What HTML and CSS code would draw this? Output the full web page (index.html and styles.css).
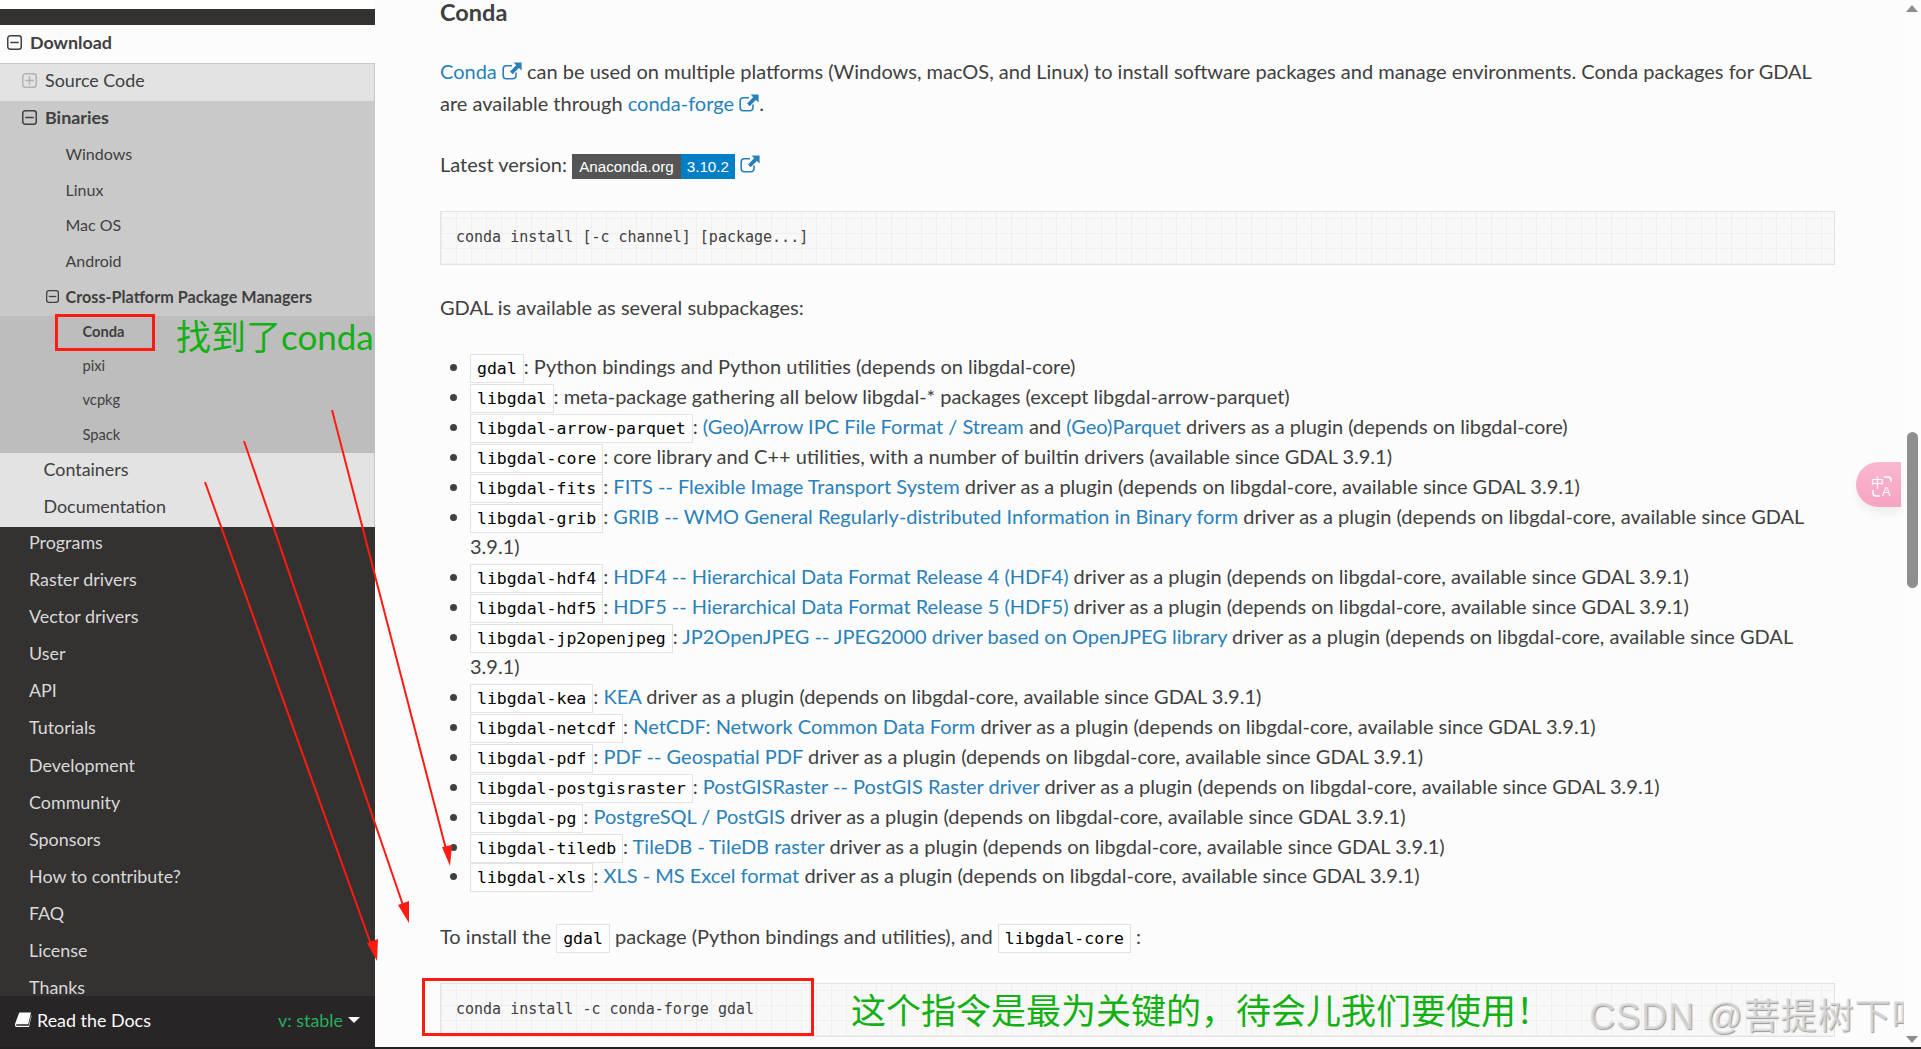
FILE: index.html
```html
<!DOCTYPE html>
<html lang="en">

<head>
    <meta charset="UTF-8">
    <title>Download - GDAL</title>
    <link rel="stylesheet" href="styles.css">
</head>

<body>
    <svg class="defs" width="0" height="0">
        <symbol id="minus" viewBox="0 0 14 14">
            <rect x="0.7" y="0.7" width="12.6" height="12.6" rx="2.4" fill="none" stroke="currentColor" stroke-width="1.4" />
            <path d="M3 7h8" stroke="currentColor" stroke-width="1.4" />
        </symbol>
        <symbol id="plus" viewBox="0 0 14 14">
            <rect x="0.7" y="0.7" width="12.6" height="12.6" rx="2.4" fill="none" stroke="currentColor" stroke-width="1.4" />
            <path d="M3 7h8M7 3v8" stroke="currentColor" stroke-width="1.4" />
        </symbol>
        <symbol id="ext" viewBox="0 0 20 18">
            <path d="M14 10.5v3.2a3 3 0 0 1-3 3H4.2a3 3 0 0 1-3-3V6.8a3 3 0 0 1 3-3H10" fill="none" stroke="currentColor" stroke-width="1.6" />
            <path d="M11.6 0.6H19.6V8.6L16.9 6 10.6 12.2 8 9.6 14.2 3.3Z" fill="currentColor" />
        </symbol>
    </svg>

    <div class="page">
        <nav class="sidebar">
            <div class="sidebar-top"></div>
            <a class="nav-l1 current"><svg class="tree-icon"><use href="#minus" /></svg>Download</a>
            <a class="nav-l2 muted"><svg class="tree-icon"><use href="#plus" /></svg>Source Code</a>
            <div class="group-l2">
                <a class="nav-l2 open"><svg class="tree-icon"><use href="#minus" /></svg>Binaries</a>
                <a class="nav-l3">Windows</a>
                <a class="nav-l3">Linux</a>
                <a class="nav-l3">Mac OS</a>
                <a class="nav-l3">Android</a>
                <a class="nav-l3 open"><svg class="tree-icon small"><use href="#minus" /></svg>Cross-Platform Package Managers</a>
                <div class="group-l4">
                    <a class="nav-l4 open">Conda</a>
                    <a class="nav-l4">pixi</a>
                    <a class="nav-l4">vcpkg</a>
                    <a class="nav-l4">Spack</a>
                </div>
            </div>
            <a class="nav-l2">Containers</a>
            <a class="nav-l2">Documentation</a>
            <a class="nav-top">Programs</a>
            <a class="nav-top">Raster drivers</a>
            <a class="nav-top">Vector drivers</a>
            <a class="nav-top">User</a>
            <a class="nav-top">API</a>
            <a class="nav-top">Tutorials</a>
            <a class="nav-top">Development</a>
            <a class="nav-top">Community</a>
            <a class="nav-top">Sponsors</a>
            <a class="nav-top">How to contribute?</a>
            <a class="nav-top">FAQ</a>
            <a class="nav-top">License</a>
            <a class="nav-top">Thanks</a>
            <div class="rtd-badge">
                <span class="rtd-name">
                    <svg class="rtd-book" viewBox="0 0 18 18">
                        <path d="M4.5 1.5H17L14 14H2.2C0.8 14 0.6 15.5 2 15.5H14.5L17.2 4.5 17.6 5 14.8 17H2C0 17-.4 15 .3 13Z" fill="#fcfcfc" />
                    </svg>
                    Read the Docs
                </span>
                <span class="rtd-version">v: stable<i class="caret"></i></span>
            </div>
        </nav>

        <main class="content">
            <h3>Conda</h3>
            <p class="tall"><a href="#">Conda <svg class="ext"><use href="#ext" /></svg></a> can be used on multiple platforms (Windows, macOS, and Linux) to install software packages and manage environments. Conda packages for GDAL are available through <a href="#">conda-forge <svg class="ext"><use href="#ext" /></svg></a>.</p>
            <p class="tall">Latest version: <span class="badge"><span class="badge-label">Anaconda.org</span><span class="badge-value">3.10.2</span></span> <a href="#"><svg class="ext"><use href="#ext" /></svg></a></p>
            <pre class="block">conda install [-c channel] [package...]</pre>
            <p>GDAL is available as several subpackages:</p>
            <ul>
                <li><code>gdal</code>: Python bindings and Python utilities (depends on libgdal-core)</li>
                <li><code>libgdal</code>: meta-package gathering all below libgdal-* packages (except libgdal-arrow-parquet)</li>
                <li><code>libgdal-arrow-parquet</code>: <a href="#">(Geo)Arrow IPC File Format / Stream</a> and <a href="#">(Geo)Parquet</a> drivers as a plugin (depends on libgdal-core)</li>
                <li><code>libgdal-core</code>: core library and C++ utilities, with a number of builtin drivers (available since GDAL 3.9.1)</li>
                <li><code>libgdal-fits</code>: <a href="#">FITS -- Flexible Image Transport System</a> driver as a plugin (depends on libgdal-core, available since GDAL 3.9.1)</li>
                <li><code>libgdal-grib</code>: <a href="#">GRIB -- WMO General Regularly-distributed Information in Binary form</a> driver as a plugin (depends on libgdal-core, available since GDAL 3.9.1)</li>
                <li><code>libgdal-hdf4</code>: <a href="#">HDF4 -- Hierarchical Data Format Release 4 (HDF4)</a> driver as a plugin (depends on libgdal-core, available since GDAL 3.9.1)</li>
                <li><code>libgdal-hdf5</code>: <a href="#">HDF5 -- Hierarchical Data Format Release 5 (HDF5)</a> driver as a plugin (depends on libgdal-core, available since GDAL 3.9.1)</li>
                <li><code>libgdal-jp2openjpeg</code>: <a href="#">JP2OpenJPEG -- JPEG2000 driver based on OpenJPEG library</a> driver as a plugin (depends on libgdal-core, available since GDAL 3.9.1)</li>
                <li><code>libgdal-kea</code>: <a href="#">KEA</a> driver as a plugin (depends on libgdal-core, available since GDAL 3.9.1)</li>
                <li><code>libgdal-netcdf</code>: <a href="#">NetCDF: Network Common Data Form</a> driver as a plugin (depends on libgdal-core, available since GDAL 3.9.1)</li>
                <li><code>libgdal-pdf</code>: <a href="#">PDF -- Geospatial PDF</a> driver as a plugin (depends on libgdal-core, available since GDAL 3.9.1)</li>
                <li><code>libgdal-postgisraster</code>: <a href="#">PostGISRaster -- PostGIS Raster driver</a> driver as a plugin (depends on libgdal-core, available since GDAL 3.9.1)</li>
                <li><code>libgdal-pg</code>: <a href="#">PostgreSQL / PostGIS</a> driver as a plugin (depends on libgdal-core, available since GDAL 3.9.1)</li>
                <li><code>libgdal-tiledb</code>: <a href="#">TileDB - TileDB raster</a> driver as a plugin (depends on libgdal-core, available since GDAL 3.9.1)</li>
                <li><code>libgdal-xls</code>: <a href="#">XLS - MS Excel format</a> driver as a plugin (depends on libgdal-core, available since GDAL 3.9.1)</li>
            </ul>
            <p class="tall">To install the <code>gdal</code> package (Python bindings and utilities), and <code>libgdal-core</code> :</p>
            <pre class="block">conda install -c conda-forge gdal</pre>
        </main>
    </div>

    <!-- things drawn on top of the screenshot -->
    <div class="notes">
        <svg class="arrows" width="1921" height="1049" viewBox="0 0 1921 1049">
            <g stroke="#ff1a12" stroke-width="2" fill="none">
                <path d="M332 410L447 853" />
                <path d="M244 441L405 911" />
                <path d="M205 482L373 950" />
            </g>
            <g fill="#ff1a12">
                <path d="M450 866L442 847 452 845Z" />
                <path d="M409 923L398 905 409 901Z" />
                <path d="M377 961L367 943 378 939Z" />
            </g>
        </svg>
        <div class="box box-conda"></div>
        <div class="box box-cmd"></div>
        <div class="green-note note-conda">找到了conda</div>
        <div class="green-note note-cmd">这个指令是最为关键的，待会儿我们要使用！</div>
        <div class="watermark">CSDN @菩提树下呀</div>
        <div class="translate">
            <svg viewBox="0 -5 24 30" width="24" height="30">
                <text x="0" y="12" class="tr-zh">中</text>
                <text x="11" y="21" class="tr-en">A</text>
                <path d="M13 2h4a3 3 0 0 1 3 3v2M2 15v3a3 3 0 0 0 3 3h4" fill="none" stroke="#fff" stroke-width="1.5" />
            </svg>
        </div>
        <div class="scrollbar">
            <i class="arrow-up"></i>
            <i class="thumb"></i>
            <i class="arrow-down"></i>
        </div>
        <div class="bottom-line"></div>
    </div>
</body>

</html>
```

FILE: styles.css
```css
* {
    box-sizing: border-box;
}

html,
body {
    margin: 0;
    height: 1049px;
    overflow: hidden;
}

body {
    background: #fcfcfc;
    font-family: "Lato", "Liberation Sans", sans-serif;
    font-size: 20px;
    color: #404040;
    position: relative;
}

a {
    color: #2980b9;
    text-decoration: none;
}

.defs {
    position: absolute;
}

.page {
    display: flex;
    height: 1049px;
}

/* sidebar */

.sidebar {
    width: 375px;
    height: 1049px;
    flex-shrink: 0;
    padding-top: 9px;
    background: linear-gradient(#fff 9px, #343131 9px);
    font-size: 17.9px;
    position: relative;
    overflow: hidden;
}

.sidebar a {
    display: flex;
    align-items: center;
    padding-bottom: 4px;
    color: #404040;
}

.sidebar-top {
    height: 16px;
}

.tree-icon {
    width: 15px;
    height: 15px;
    flex-shrink: 0;
    margin-right: 8px;
}

.tree-icon.small {
    width: 13px;
    height: 13px;
    margin-right: 7px;
}

.nav-l1 {
    height: 39px;
    padding-left: 7px;
    background: #fcfcfc;
    font-weight: 700;
    border-bottom: 1px solid #c9c9c9;
}

.sidebar a.nav-l2 {
    height: 37px;
    padding-bottom: 5px;
    padding-left: 43.5px;
    background: #e3e3e3;
    border-right: 1px solid #c9c9c9;
}

.nav-l2 .tree-icon {
    margin-left: -21.5px;
}

.nav-l2.muted .tree-icon {
    color: #b3b3b3;
}

.group-l2 {
    background: #c9c9c9;
}

.sidebar .group-l2 a.nav-l2 {
    background: none;
    border: 0;
}

.nav-l2.open {
    font-weight: 700;
}

.nav-l3 {
    height: 35.6px;
    padding-left: 65.5px;
    font-size: 16px;
}

.nav-l3 .tree-icon {
    margin-left: -20px;
}

.nav-l3.open {
    font-size: 16.2px;
    font-weight: 700;
}

.group-l4 {
    background: #bdbdbd;
}

.nav-l4 {
    height: 34.2px;
    padding-left: 82.5px;
    font-size: 14.7px;
}

.nav-l4.open {
    font-weight: 700;
}

.sidebar a.nav-top {
    height: 37.05px;
    padding-bottom: 6px;
    padding-left: 29px;
    color: #d9d9d9;
}

.rtd-badge {
    position: absolute;
    left: 0;
    right: 0;
    bottom: 2px;
    height: 51px;
    display: flex;
    align-items: center;
    justify-content: space-between;
    padding: 0 15px 4px;
    background: #272525;
}

.rtd-name {
    display: flex;
    align-items: center;
    gap: 5px;
    color: #fcfcfc;
}

.rtd-book {
    width: 17px;
    height: 17px;
}

.rtd-version {
    display: flex;
    align-items: center;
    gap: 5px;
    color: #27ae60;
}

.caret {
    width: 0;
    height: 0;
    border: 6px solid transparent;
    border-top: 6px solid #fcfcfc;
    border-bottom: 0;
}

/* content */

.content {
    width: 1460px;
    padding-left: 65px;
    margin-top: -2px;
    flex-shrink: 0;
}

h3 {
    margin: -1px 0 29px;
    font-size: 23.5px;
    line-height: 30px;
    font-weight: 700;
}

p {
    margin: 0 0 30px;
    line-height: 30px;
}

p.tall {
    line-height: 31.5px;
}

.ext {
    width: 20px;
    height: 18px;
    vertical-align: -1px;
    color: #2980b9;
}

.badge {
    display: inline-flex;
    height: 25px;
    line-height: 25px;
    font-family: "Liberation Sans", sans-serif;
    font-size: 15.2px;
    color: #fff;
}

.badge-label {
    padding: 0 7px;
    background: #555;
}

.badge-value {
    padding: 0 6px;
    background: #007ec6;
}

.block {
    width: 1395px;
    height: 54px;
    margin: 0 0 27.5px;
    padding: 0 15px;
    font-family: "DejaVu Sans Mono", monospace;
    font-size: 15px;
    line-height: 50px;
    color: #404040;
    border: 1px solid #e1e4e5;
    background-color: #f8f8f8;
    background-image:
        repeating-linear-gradient(90deg, #f0f0f0 0 1px, transparent 1px 15px),
        repeating-linear-gradient(0deg, #f0f0f0 0 1px, transparent 1px 15px);
}

ul {
    width: 1395px;
    margin: 0 0 30px;
    padding-left: 30px;
    line-height: 29.97px;
}

code {
    padding: 4px 6px;
    font-family: "DejaVu Sans Mono", monospace;
    font-size: 16.5px;
    line-height: 1;
    color: #000;
    background: #fff;
    border: 1px solid #e1e4e5;
}

/* annotations and page chrome lying over the screenshot */

.notes {
    position: absolute;
    inset: 0;
    pointer-events: none;
}

.arrows {
    position: absolute;
    left: 0;
    top: 0;
}

.box {
    position: absolute;
    border: 3px solid #ff1a12;
}

.box-conda {
    left: 55px;
    top: 314px;
    width: 100px;
    height: 37px;
}

.box-cmd {
    left: 422px;
    top: 978px;
    width: 392px;
    height: 58px;
}

.green-note {
    position: absolute;
    color: #13b013;
    font-family: "Lato", "Noto Sans CJK SC", sans-serif;
    white-space: nowrap;
}

.note-conda {
    left: 176px;
    top: 311px;
    font-size: 35px;
    line-height: 50px;
}

.note-cmd {
    left: 851px;
    top: 985px;
    font-size: 35px;
    line-height: 50px;
}

.watermark {
    position: absolute;
    left: 1589px;
    top: 992px;
    font-family: "Liberation Sans", "Noto Sans CJK SC", sans-serif;
    font-size: 36px;
    letter-spacing: 1px;
    line-height: 50px;
    white-space: nowrap;
    color: rgba(225, 225, 225, 0.8);
    text-shadow: 1px 1px 1px #999;
}

.translate {
    position: absolute;
    left: 1856px;
    top: 462px;
    width: 45px;
    height: 45px;
    display: flex;
    align-items: center;
    padding-left: 15px;
    border-radius: 23px 0 0 23px;
    background: linear-gradient(#fbb7d0, #f5a3c2);
    box-shadow: 0 6px 10px rgba(0, 0, 0, 0.06);
}

.tr-zh {
    font-family: "Noto Sans CJK SC", sans-serif;
    font-size: 13px;
    fill: #fff;
}

.tr-en {
    font-family: "Liberation Sans", sans-serif;
    font-size: 13px;
    fill: #fff;
}

.scrollbar {
    position: absolute;
    right: 0;
    top: 0;
    bottom: 2px;
    width: 17px;
    background: #fdfdfd;
}

.arrow-up,
.arrow-down {
    position: absolute;
    left: 2px;
    width: 0;
    height: 0;
    border-left: 6px solid transparent;
    border-right: 6px solid transparent;
}

.arrow-up {
    top: 5px;
    border-bottom: 7px solid #8c8c8c;
}

.arrow-down {
    bottom: 4px;
    border-top: 7px solid #8c8c8c;
}

.thumb {
    position: absolute;
    left: 3px;
    top: 432px;
    width: 11px;
    height: 156px;
    border-radius: 6px;
    background: #8f8f8f;
}

.bottom-line {
    position: absolute;
    left: 0;
    right: 0;
    bottom: 0;
    height: 2px;
    background: #222;
}
```
